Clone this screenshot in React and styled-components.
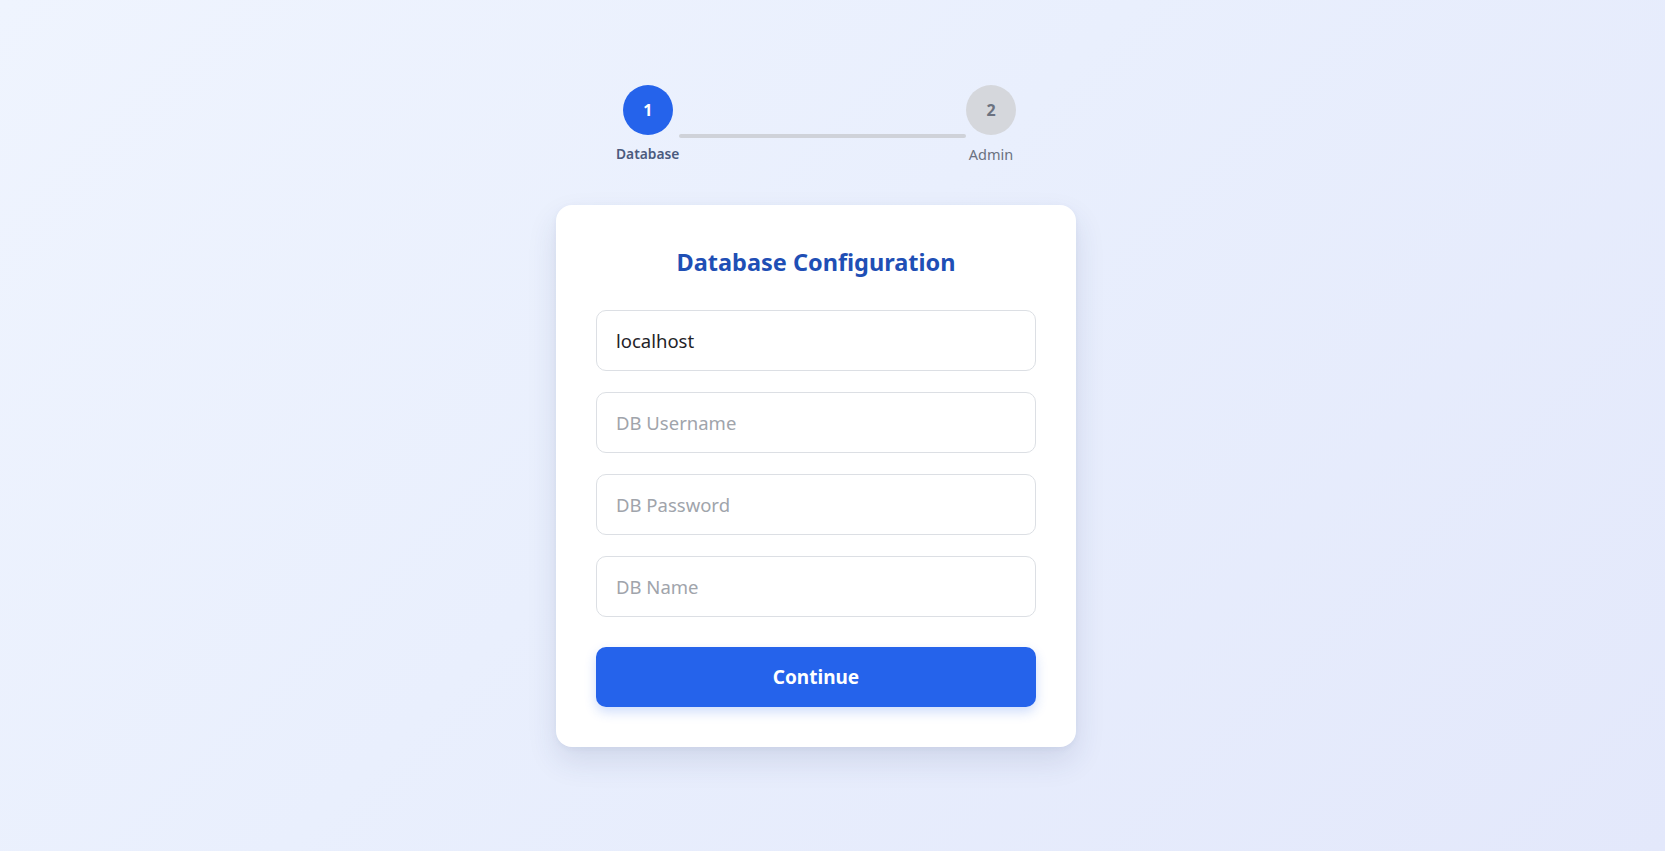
import React from 'react';
import styled, { createGlobalStyle } from 'styled-components';

const GlobalStyle = createGlobalStyle`
    html, body {
        margin: 0;
        padding: 0;
    }
    body {
        min-height: 100vh;
        font-family: "Noto Sans", "Open Sans", sans-serif;
        background: linear-gradient(135deg, #eff4fe 0%, #e9effd 45%, #e3e8fb 100%);
    }
    * {
        box-sizing: border-box;
    }
`;

const Page = styled.div`
    display: flex;
    flex-direction: column;
    align-items: center;
    min-height: 100vh;
    padding: 85px 33px 40px 0;
`;

const Stepper = styled.div`
    display: flex;
    align-items: flex-start;
    width: 400px;
`;

const Step = styled.div`
    display: flex;
    flex-direction: column;
    align-items: center;
    gap: 9px;
`;

const Circle = styled.div`
    display: flex;
    justify-content: center;
    align-items: center;
    width: 50px;
    height: 50px;
    border-radius: 50%;
    font-size: 16px;
    font-weight: 700;
    background-color: ${(p) => (p.active ? '#2563eb' : '#d5d7dc')};
    color: ${(p) => (p.active ? '#ffffff' : '#6b7280')};
`;

const StepLabel = styled.span`
    font-size: ${(p) => (p.active ? '13.8px' : '14.5px')};
    line-height: 20px;
    font-weight: ${(p) => (p.active ? 600 : 400)};
    color: ${(p) => (p.active ? '#4b5b7e' : '#6b7280')};
`;

const Connector = styled.div`
    flex: 1;
    height: 4px;
    margin-top: 49px;
    border-radius: 2px;
    background-color: #cfd2d9;
`;

const Card = styled.div`
    width: 520px;
    margin-top: 41px;
    padding: 40px;
    background-color: #ffffff;
    border-radius: 16px;
    box-shadow: 0 14px 30px rgba(40, 55, 110, 0.12), 0 2px 6px rgba(40, 55, 110, 0.05);
`;

const Title = styled.h2`
    margin: 2px 0 33px;
    font-size: 23.5px;
    line-height: 30px;
    font-weight: 700;
    text-align: center;
    color: #1f4fb5;
`;

const Form = styled.form`
    display: flex;
    flex-direction: column;
    gap: 21px;
`;

const Input = styled.input`
    width: 100%;
    height: 61px;
    padding: 0 19px;
    border: 1px solid #dcdfe4;
    border-radius: 10px;
    background-color: #ffffff;
    font-family: inherit;
    font-size: 18.5px;
    color: #1f2328;
    outline: none;

    &::placeholder {
        color: #a0a4ab;
    }
`;

const Button = styled.button`
    height: 60px;
    margin-top: 9px;
    border: none;
    border-radius: 10px;
    background-color: #2563eb;
    color: #ffffff;
    font-family: inherit;
    font-size: 19px;
    font-weight: 700;
    cursor: pointer;
    box-shadow: 0 5px 12px rgba(37, 99, 235, 0.22);
`;

const App = () => {
    return (
        <>
            <GlobalStyle />
            <Page>
                <Stepper>
                    <Step>
                        <Circle active>1</Circle>
                        <StepLabel active>Database</StepLabel>
                    </Step>
                    <Connector />
                    <Step>
                        <Circle>2</Circle>
                        <StepLabel>Admin</StepLabel>
                    </Step>
                </Stepper>
                <Card>
                    <Title>Database Configuration</Title>
                    <Form onSubmit={(e) => e.preventDefault()}>
                        <Input type="text" defaultValue="localhost" placeholder="DB Host" />
                        <Input type="text" placeholder="DB Username" />
                        <Input type="password" placeholder="DB Password" />
                        <Input type="text" placeholder="DB Name" />
                        <Button type="submit">Continue</Button>
                    </Form>
                </Card>
            </Page>
        </>
    );
};

export default App;
